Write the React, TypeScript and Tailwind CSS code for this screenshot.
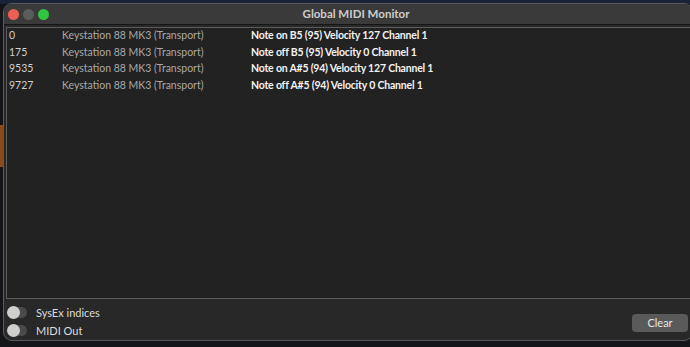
const rows = [
  { t: '0', dev: 'Keystation 88 MK3 (Transport)', msg: 'Note on B5 (95) Velocity 127 Channel 1' },
  { t: '175', dev: 'Keystation 88 MK3 (Transport)', msg: 'Note off B5 (95) Velocity 0 Channel 1' },
  { t: '9535', dev: 'Keystation 88 MK3 (Transport)', msg: 'Note on A#5 (94) Velocity 127 Channel 1' },
  { t: '9727', dev: 'Keystation 88 MK3 (Transport)', msg: 'Note off A#5 (94) Velocity 0 Channel 1' },
];

function Toggle({ label }: { label: string }) {
  return (
    <div className="flex items-center gap-[9px]">
      <div className="relative w-[19px] h-[11px] rounded-full bg-[#4a4a4a]">
        <div className="absolute left-[-1px] top-[-1px] w-[13px] h-[13px] rounded-full bg-[#cfcfcf]" />
      </div>
      <span className="text-[11px] leading-[13px] text-[#dcdcdc]">{label}</span>
    </div>
  );
}

export default function App() {
  return (
    <div
      className="relative w-[690px] h-[347px] bg-[#141518] overflow-hidden"
      style={{ fontFamily: 'Lato, "Liberation Sans", sans-serif' }}
    >
      {/* desktop behind the window */}
      <div className="absolute left-0 top-0 w-full h-[4px] bg-[#1a2238]" />
      <div className="absolute left-0 top-[125px] w-[3px] h-[42px] bg-[#8a4a1c]" />

      <div className="absolute left-[3px] top-[3px] w-[690px] h-[338px] rounded-[9px] border border-[#5a5a5a] bg-[#282828] flex flex-col overflow-hidden">
        {/* title bar */}
        <div className="relative h-[21px] shrink-0 bg-[#3a3a3a] border-b border-[#161616] flex items-center">
          <div className="flex items-center gap-[4px] pl-[4px]">
            <span className="w-[11px] h-[11px] rounded-full bg-[#ec5f57]" />
            <span className="w-[11px] h-[11px] rounded-full bg-[#5c5c5c]" />
            <span className="w-[11px] h-[11px] rounded-full bg-[#2ec540]" />
          </div>
          <div className="absolute inset-0 flex items-center justify-center pl-[16px] pb-[1px] text-[11.5px] font-bold text-[#cdcdcd]">
            Global MIDI Monitor
          </div>
        </div>

        {/* event list */}
        <div className="mt-[2px] ml-[2px] h-[272px] shrink-0 border border-[#5c5c5c] bg-[#222222]">
          {rows.map((r, i) => (
            <div key={i} className="flex h-[16.4px] items-center pb-[1px] text-[10.5px] leading-none">
              <span className="w-[55px] pl-[2px] text-[#d0d0d0]">{r.t}</span>
              <span className="w-[189px] text-[#a9a9a9]">{r.dev}</span>
              <span className="font-bold tracking-[-0.2px] text-[#f2f2f2]">{r.msg}</span>
            </div>
          ))}
        </div>

        {/* footer */}
        <div className="flex flex-1 items-start justify-between pl-[4px] pr-[4px] pt-[7px]">
          <div className="flex flex-col gap-[5px]">
            <Toggle label="SysEx indices" />
            <Toggle label="MIDI Out" />
          </div>
          <button className="mt-[8px] w-[56px] h-[18px] rounded-[4px] bg-[#5a5a5a] text-[11px] text-[#e6e6e6]">
            Clear
          </button>
        </div>
      </div>
    </div>
  );
}
